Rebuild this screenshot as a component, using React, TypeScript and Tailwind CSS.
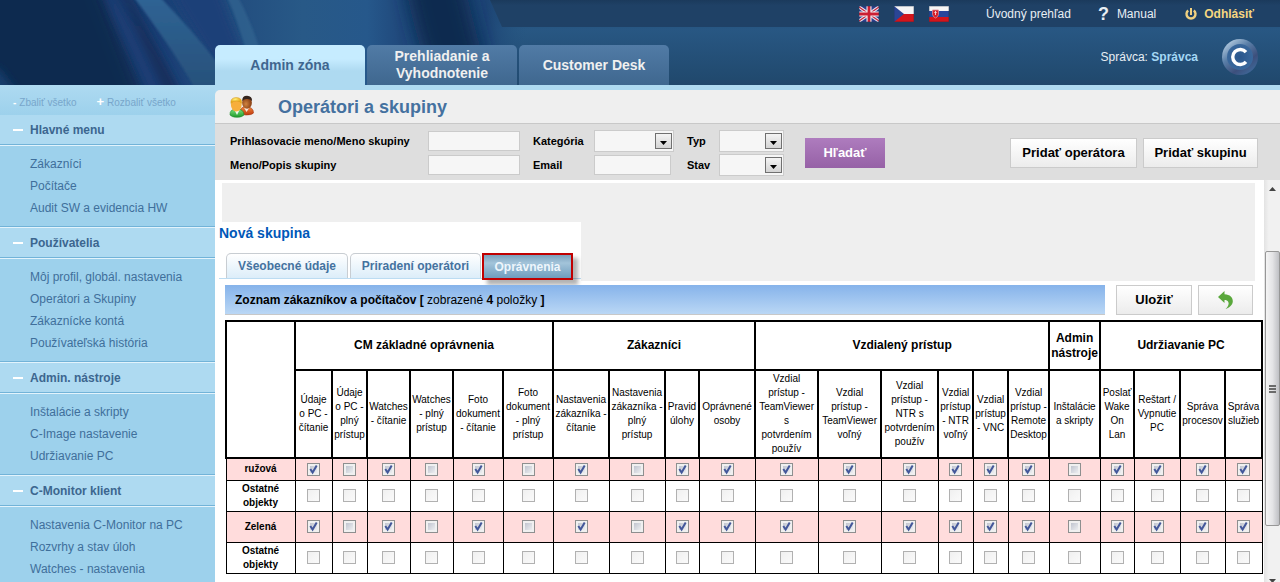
import type { ReactNode } from "react";

type Section = { title: string; items: string[] };

const sections: Section[] = [
  { title: "Hlavné menu", items: ["Zákazníci", "Počítače", "Audit SW a evidencia HW"] },
  {
    title: "Používatelia",
    items: ["Môj profil, globál. nastavenia", "Operátori a Skupiny", "Zákaznícke kontá", "Používateľská história"],
  },
  { title: "Admin. nástroje", items: ["Inštalácie a skripty", "C-Image nastavenie", "Udržiavanie PC"] },
  { title: "C-Monitor klient", items: ["Nastavenia C-Monitor na PC", "Rozvrhy a stav úloh", "Watches - nastavenia"] },
];

const groups = [
  { title: "CM základné oprávnenia", span: 6 },
  { title: "Zákazníci", span: 4 },
  { title: "Vzdialený prístup", span: 6 },
  { title: "Admin nástroje", span: 1 },
  { title: "Udržiavanie PC", span: 4 },
];

const columns = [
  { label: "Údaje\no PC -\nčítanie", width: "w-[37px]", on: true },
  { label: "Údaje\no PC -\nplný\nprístup", width: "w-[35px]", on: false },
  { label: "Watches\n- čítanie", width: "w-[43px]", on: true },
  { label: "Watches\n- plný\nprístup", width: "w-[43px]", on: false },
  { label: "Foto\ndokument\n- čítanie", width: "w-[50px]", on: true },
  { label: "Foto\ndokument\n- plný\nprístup", width: "w-[50px]", on: false },
  { label: "Nastavenia\nzákazníka -\nčítanie", width: "w-[56px]", on: true },
  { label: "Nastavenia\nzákazníka -\nplný\nprístup", width: "w-[56px]", on: false },
  { label: "Pravid\núlohy", width: "w-[34px]", on: true },
  { label: "Oprávnené\nosoby", width: "w-[56px]", on: true },
  { label: "Vzdial\nprístup -\nTeamViewer\ns\npotvrdením\npoužív", width: "w-[63px]", on: true },
  { label: "Vzdial\nprístup -\nTeamViewer\nvoľný", width: "w-[63px]", on: true },
  { label: "Vzdial\nprístup -\nNTR s\npotvrdením\npoužív", width: "w-[57px]", on: true },
  { label: "Vzdial\nprístup\n- NTR\nvoľný", width: "w-[35px]", on: true },
  { label: "Vzdial\nprístup\n- VNC", width: "w-[35px]", on: true },
  { label: "Vzdial\nprístup -\nRemote\nDesktop", width: "w-[41px]", on: true },
  { label: "Inštalácie\na skripty", width: "w-[51px]", on: false },
  { label: "Poslať\nWake\nOn\nLan", width: "w-[34px]", on: true },
  { label: "Reštart /\nVypnutie\nPC", width: "w-[46px]", on: true },
  { label: "Správa\nprocesov", width: "w-[45px]", on: true },
  { label: "Správa\nslužieb", width: "w-[37px]", on: true },
];

const rows = [
  { name: "ružová", active: true, height: "h-[22px]" },
  { name: "Ostatné\nobjekty", active: false, height: "h-[31px]" },
  { name: "Zelená", active: true, height: "h-[31px]" },
  { name: "Ostatné\nobjekty", active: false, height: "h-[31px]" },
];

function HeaderArt() {
  return (
    <svg className="absolute inset-y-0 left-0 h-full w-[540px]" viewBox="0 0 540 85" preserveAspectRatio="none" aria-hidden="true">
      <defs>
        <linearGradient id="base" x1="0" x2="1" y1="0" y2="0">
          <stop offset="0" stopColor="#10294f" />
          <stop offset="0.3" stopColor="#1a3f75" />
          <stop offset="0.45" stopColor="#234f80" />
          <stop offset="0.56" stopColor="#285987" />
          <stop offset="0.68" stopColor="#26588b" />
          <stop offset="0.74" stopColor="#20497c" />
          <stop offset="0.9" stopColor="#1c4475" />
          <stop offset="0.98" stopColor="#265680" stopOpacity="0" />
        </linearGradient>
        <linearGradient id="stripe" x1="0" x2="0" y1="0" y2="1">
          <stop offset="0" stopColor="#2f6495" />
          <stop offset="1" stopColor="#27507a" />
        </linearGradient>
        <filter id="wide" filterUnits="userSpaceOnUse" x="-80" y="-80" width="700" height="260">
          <feGaussianBlur stdDeviation="9" />
        </filter>
        <filter id="soft" filterUnits="userSpaceOnUse" x="-80" y="-80" width="700" height="260">
          <feGaussianBlur stdDeviation="4" />
        </filter>
        <filter id="fine" filterUnits="userSpaceOnUse" x="-80" y="-80" width="700" height="260">
          <feGaussianBlur stdDeviation="1" />
        </filter>
      </defs>
      <rect width="540" height="85" fill="url(#base)" />
      <path d="M-60 -60H85L165 150H-60Z" fill="#0f2950" filter="url(#wide)" />
      <path d="M-30 60L0 70L30 110H-30Z" fill="#173c6c" filter="url(#soft)" />
      <g filter="url(#soft)">
        <path d="M95 -30L115 -5C135 30 148 60 170 110H155C135 60 115 30 95 -30Z" fill="#1a3e74" />
        <path d="M115 -30C140 20 160 50 190 110H172C150 60 135 30 115 -30Z" fill="#132f5c" />
        <path d="M165 -20H215C228 20 240 40 255 90H228C210 50 185 20 165 -20Z" fill="#1b3f78" />
      </g>
      <path d="M400 -50H458C468 10 480 40 500 130H450C430 70 412 40 400 -50Z" fill="#0f2950" filter="url(#wide)" />
      <g filter="url(#fine)">
        <path d="M132 -5H158C180 18 200 40 218 64V90H196C176 55 155 25 132 -5Z" fill="url(#stripe)" />
        <path d="M226 -5H237C246 12 253 28 260 50H246C240 30 234 12 226 -5Z" fill="#30628f" opacity="0.8" />
      </g>
    </svg>
  );
}

function FlagUK() {
  return (
    <svg width="20" height="16" viewBox="0 0 20 16" aria-hidden="true">
      <rect width="20" height="16" fill="#2b3f8c" />
      <path d="M0 1L20 15M20 1L0 15" stroke="#e9e4ee" strokeWidth="3.4" />
      <path d="M0 1L20 15M20 1L0 15" stroke="#c5263c" strokeWidth="1.2" />
      <path d="M10 0V16M0 8H20" stroke="#f3eef2" strokeWidth="5" />
      <path d="M10 0V16M0 8H20" stroke="#cb1f33" strokeWidth="2.8" />
      <rect width="20" height="16" fill="none" stroke="#1a2c4a" strokeOpacity="0.5" />
    </svg>
  );
}

function FlagCZ() {
  return (
    <svg width="20" height="16" viewBox="0 0 20 16" aria-hidden="true">
      <rect width="20" height="8" fill="#f5f5f5" />
      <rect y="8" width="20" height="8" fill="#d3151b" />
      <path d="M0 0L10 8L0 16Z" fill="#2a4595" />
      <rect width="20" height="16" fill="none" stroke="#1a2c4a" strokeOpacity="0.5" />
    </svg>
  );
}

function FlagSK() {
  return (
    <svg width="20" height="16" viewBox="0 0 20 16" aria-hidden="true">
      <rect width="20" height="5" fill="#f5f5f5" />
      <rect y="5" width="20" height="6" fill="#27469c" />
      <rect y="11" width="20" height="5" fill="#d3151b" />
      <path d="M3.500 4H9.500V8.500Q9 11 6.500 12Q4 11 3.500 8.500Z" fill="#d8202a" stroke="#e08c98" strokeWidth="0.800" />
      <path d="M6.500 5V9M5.300 6.500H7.700" stroke="#f4d5da" strokeWidth="0.900" />
      <rect width="20" height="16" fill="none" stroke="#1a2c4a" strokeOpacity="0.5" />
    </svg>
  );
}

function PowerIcon() {
  return (
    <svg width="12" height="12" viewBox="0 0 12 12" fill="none" stroke="#f0d080" aria-hidden="true">
      <path d="M3.200 2.500A4.500 4.500 0 1 0 8.800 2.500" strokeWidth="2.400" />
      <path d="M6 0V7" strokeWidth="2" />
    </svg>
  );
}

function LogoBadge() {
  return (
    <svg width="38" height="38" viewBox="0 0 38 38" aria-hidden="true">
      <defs>
        <linearGradient id="ring" x1="0.1" y1="0.1" x2="0.8" y2="1">
          <stop offset="0" stopColor="#b4cbe0" />
          <stop offset="0.350" stopColor="#5a7fa8" />
          <stop offset="0.700" stopColor="#3c4f7c" />
          <stop offset="1" stopColor="#3f6b9c" />
        </linearGradient>
        <radialGradient id="disc">
          <stop offset="0" stopColor="#2a568c" />
          <stop offset="1" stopColor="#3a689c" />
        </radialGradient>
      </defs>
      <circle cx="19" cy="19" r="18" fill="url(#ring)" />
      <circle cx="19" cy="19" r="13" fill="url(#disc)" />
      <path d="M25 14.200A7.500 7.500 0 1 0 25 23.800" fill="none" stroke="#fff" strokeWidth="3.400" />
    </svg>
  );
}

function PeopleIcon() {
  return (
    <svg width="26" height="24" viewBox="0 0 26 24" aria-hidden="true">
      <defs>
        <linearGradient id="green" x1="0" y1="0" x2="0" y2="1">
          <stop offset="0" stopColor="#7fe07c" />
          <stop offset="1" stopColor="#1c9a2b" />
        </linearGradient>
        <linearGradient id="orange" x1="0" y1="0" x2="0" y2="1">
          <stop offset="0" stopColor="#f28a3c" />
          <stop offset="1" stopColor="#c0390e" />
        </linearGradient>
        <radialGradient id="blond" cx="0.4" cy="0.3">
          <stop offset="0" stopColor="#fff07a" />
          <stop offset="1" stopColor="#e8a81a" />
        </radialGradient>
        <radialGradient id="tan" cx="0.4" cy="0.6">
          <stop offset="0" stopColor="#d08440" />
          <stop offset="1" stopColor="#8f4518" />
        </radialGradient>
      </defs>
      <path d="M10 19Q11 11.500 17 11.500Q24.500 12 24.500 18Q23 20 17 20Z" fill="url(#orange)" stroke="#a63510" strokeWidth="0.600" />
      <path d="M15 12.500L17.500 17L20.500 12.500Z" fill="#f5e9e0" />
      <ellipse cx="18" cy="7.800" rx="4.900" ry="6" fill="url(#tan)" />
      <path d="M13.200 6Q13 0.800 18 0.700Q23.400 1 23 6Q21 3.700 18 4Q15 3.700 13.200 6Z" fill="#33231c" />
      <path d="M1 20Q0.500 14 7.500 14Q15 14 15 20Q13 22.300 8 22.300Q3 22.300 1 20Z" fill="url(#green)" stroke="#1c8a2a" strokeWidth="0.600" />
      <path d="M5.500 15L8 20L10.500 15Z" fill="#effaf0" />
      <ellipse cx="7.300" cy="9.800" rx="5.400" ry="6.600" fill="#f7ae3c" />
      <path d="M1.900 8.500Q1.200 2.600 7.300 2.500Q13.300 2.600 12.700 8.500Q10.500 5.700 7.300 6Q4.100 5.700 1.900 8.500Z" fill="url(#blond)" stroke="#d59a1c" strokeWidth="0.500" />
    </svg>
  );
}

function BackArrow() {
  return (
    <svg width="15" height="18" viewBox="0 0 15 18" aria-hidden="true">
      <path d="M0 6L6.500 0V3.200C12 3.400 15 6.500 14.800 10.500C14.600 14 11.500 16.800 7.600 18C10.200 15.500 11.300 13 10.300 11C9.600 9.600 8.300 9 6.500 9V12Z" fill="#5aa83c" />
    </svg>
  );
}

function TextField({ id, width }: { id: string; width: string }) {
  return <input id={id} type="text" className={`${width} block h-5 border border-[#cbcbcb] bg-[#f6f6f6] px-1 text-xs outline-none`} />;
}

function SelectField({ id, width }: { id: string; width: string }) {
  return (
    <span className={`${width} relative block h-[22px]`}>
      <select id={id} className="block size-full appearance-none border border-[#cbcbcb] bg-[#f6f6f6] text-xs outline-none">
        <option />
      </select>
      <span className="pointer-events-none absolute top-[3px] right-[2px] flex h-4 w-[17px] items-center justify-center border border-[#707070] bg-linear-to-b from-[#f4f4f4] to-[#d4d4d4]">
        <svg width="7" height="4" viewBox="0 0 7 4" className="mt-[3px]" aria-hidden="true">
          <path d="M0 0H7L3.500 4Z" fill="#000" />
        </svg>
      </span>
    </span>
  );
}

function FieldLabel({ id, children }: { id: string; children: ReactNode }) {
  return (
    <label htmlFor={id} className="text-[11px] font-bold text-black">
      {children}
    </label>
  );
}

function PlainButton({ width, label, children }: { width: string; label?: string; children: ReactNode }) {
  return (
    <button
      type="button"
      aria-label={label}
      className={`${width} flex h-[30px] shrink-0 items-center justify-center border border-[#cbcbcb] bg-linear-to-b from-white to-[#ececec] text-[13px] font-bold whitespace-nowrap text-black`}
    >
      {children}
    </button>
  );
}

function Check({ label, checked, disabled }: { label: string; checked: boolean; disabled: boolean }) {
  return (
    <span className="relative mx-auto block size-[13px]">
      <input
        type="checkbox"
        aria-label={label}
        defaultChecked={checked}
        disabled={disabled}
        className="peer block size-[13px] appearance-none border border-[#8e8f8f] bg-linear-to-br from-[#b4b9c6] to-[#fafafa] shadow-[inset_0_0_0_2px_#f0f0f0] disabled:border-[#b1b1b1] disabled:from-[#f0f0f0] disabled:shadow-none"
      />
      <svg className="pointer-events-none absolute inset-0 hidden peer-checked:block" width="13" height="13" viewBox="0 0 13 13" aria-hidden="true">
        <path d="M3.300 6L5.600 9.500L9.700 2.500" fill="none" stroke="#43579a" strokeWidth="2" />
      </svg>
    </span>
  );
}

function Header() {
  const tab = "flex h-10 w-[150px] items-center justify-center rounded-t-[5px] px-4 text-center text-sm leading-[17px] font-bold";
  return (
    <header className="relative h-[85px] shrink-0 bg-linear-to-b from-[#1f4a72] via-[#285783] via-35% to-[#20486c]">
      <HeaderArt />
      <div className="relative flex h-full">
        <nav className="flex items-end gap-[2px] pl-[215px]">
          <a href="#admin" className={`${tab} bg-linear-to-b from-[#c6ecff] from-35% to-[#aedaf1] to-65% text-[#3f668f]`}>
            Admin zóna
          </a>
          <a href="#view" className={`${tab} bg-linear-to-b from-[#517ba6] to-[#3f678f] text-[#f0f0f0]`}>
            Prehliadanie a Vyhodnotenie
          </a>
          <a href="#desk" className={`${tab} bg-linear-to-b from-[#517ba6] to-[#3f678f] text-[#f0f0f0]`}>
            Customer Desk
          </a>
        </nav>
      </div>
      <div className="absolute inset-y-0 right-0 left-[490px] flex flex-col">
        <div className="flex h-[27px] items-center justify-end bg-linear-to-b from-[#1b3a5c] to-[#1f4166] to-20% pr-[26px] text-xs text-[#e8eef4] [clip-path:polygon(0_0,100%_0,100%_100%,12px_100%)]">
          <span className="mr-[37px] flex gap-[15px]">
            <a href="#en" aria-label="English"><FlagUK /></a>
            <a href="#cs" aria-label="Čeština"><FlagCZ /></a>
            <a href="#sk" aria-label="Slovenčina"><FlagSK /></a>
          </span>
          <a href="#overview" className="mr-[27px]">Úvodný prehľad</a>
          <a href="#manual" className="mr-[29px] flex items-center gap-2">
            <span className="text-lg leading-4 font-bold">?</span>
            Manual
          </a>
          <a href="#logout" className="flex items-center gap-[7px] font-bold text-[#f6d680]">
            <PowerIcon />
            Odhlásiť
          </a>
        </div>
        <div className="flex grow items-center justify-end gap-[23px] pt-px pr-[21px] text-xs text-[#e8eef4]">
          <span>
            Správca: <a href="#profile" className="font-bold text-[#a5d8f5]">Správca</a>
          </span>
          <LogoBadge />
        </div>
      </div>
    </header>
  );
}

function Sidebar() {
  return (
    <aside className="w-[215px] shrink-0 overflow-hidden bg-[#9dd1ec]">
      <div className="flex h-[30px] items-center bg-linear-to-b from-[#aedaf1] to-[#9dd1ec] pt-1 pl-[13px] text-[10px] text-[#78a6cb]">
        <button type="button" className="mr-5 flex items-center gap-[3px]">
          <span className="font-bold text-white">-</span>Zbaliť všetko
        </button>
        <button type="button" className="flex items-center gap-[3px]">
          <span className="text-[13px] leading-3 font-bold text-white">+</span>Rozbaliť všetko
        </button>
      </div>
      {sections.map((s, i) => (
        <section key={s.title}>
          <h2
            className={`${i ? "border-t border-[#72b3d8]" : ""} flex flex-col text-xs font-bold text-[#3c668f]`}
          >
            <span className={`${i ? "h-[31px] border-t border-t-[#e2f3fc]" : "h-[30px]"} flex items-center gap-[7px] border-b border-b-[#72b3d8] bg-[#aedaf1] pl-[13px]`}>
              <span className="h-[2px] w-[10px] bg-white" />
              {s.title}
            </span>
            <span className="h-px bg-[#e2f3fc]" />
          </h2>
          <ul className="py-[7px] pl-[30px] text-xs leading-[22px] text-[#3f6f9b]">
            {s.items.map((item) => (
              <li key={item} className="whitespace-nowrap">
                <a href="#menu">{item}</a>
              </li>
            ))}
          </ul>
        </section>
      ))}
    </aside>
  );
}

function Filters() {
  return (
    <form className="flex shrink-0 items-center bg-[#dedede] pt-[5px] pr-[22px] pb-[3px] pl-[15px]">
      <div className="grid auto-rows-[24px] grid-cols-[198px_105px_61px_93px_32px_65px] items-center">
        <FieldLabel id="login">Prihlasovacie meno/Meno skupiny</FieldLabel>
        <TextField id="login" width="w-[92px]" />
        <FieldLabel id="category">Kategória</FieldLabel>
        <SelectField id="category" width="w-20" />
        <FieldLabel id="type">Typ</FieldLabel>
        <SelectField id="type" width="w-[65px]" />
        <FieldLabel id="name">Meno/Popis skupiny</FieldLabel>
        <TextField id="name" width="w-[92px]" />
        <FieldLabel id="email">Email</FieldLabel>
        <TextField id="email" width="w-[77px]" />
        <FieldLabel id="state">Stav</FieldLabel>
        <SelectField id="state" width="w-[65px]" />
      </div>
      <button type="button" className="ml-[21px] h-[30px] w-20 bg-linear-to-b from-[#ae7cbe] to-[#9661a6] text-[13px] font-bold text-white">
        Hľadať
      </button>
      <div className="ml-auto flex gap-[6px]">
        <PlainButton width="w-[127px]">Pridať operátora</PlainButton>
        <PlainButton width="w-[115px]">Pridať skupinu</PlainButton>
      </div>
    </form>
  );
}

function GroupPanel() {
  const tab = "flex h-[25px] items-center justify-center rounded-t-[5px] border border-b-0 border-[#c8cdd2] bg-linear-to-b from-white to-[#dcedf9] text-xs font-bold text-[#44729f]";
  return (
    <div className="mr-[9px] ml-[7px] bg-[#efefef] pt-[39px]">
      <div className="-ml-[3px] w-[362px] bg-white pb-[2px]">
        <h2 className="h-[31px] pt-[1px] text-sm leading-5 font-bold text-[#0058b8]">Nová skupina</h2>
        <div className="flex gap-[2px] border-b border-[#bcdcf2] pl-[7px]">
          <button type="button" className={`${tab} w-[122px]`}>Všeobecné údaje</button>
          <button type="button" className={`${tab} w-[131px]`}>Priradení operátori</button>
          <button
            type="button"
            className="-mb-[2px] -ml-px flex h-[27px] w-[91px] items-center justify-center border-2 border-[#c00000] bg-linear-to-b from-[#7ba0bb] via-[#a3c4da] via-35% to-[#6f9dbd] text-xs font-bold text-[#eef6fc] shadow-[5px_5px_4px_rgba(0,0,0,0.3)]"
          >
            Oprávnenia
          </button>
        </div>
      </div>
    </div>
  );
}

function PermissionTable() {
  const head = "border-2 border-black p-0 text-center align-middle";
  return (
    <table className="w-full table-fixed border-collapse bg-white text-black">
      <colgroup>
        <col className="w-[69px]" />
        {columns.map((c) => (
          <col key={c.label} className={c.width} />
        ))}
      </colgroup>
      <thead>
        <tr className="h-[49px] text-xs leading-[15px] font-bold">
          <th rowSpan={2} className={head} aria-label="Objekt" />
          {groups.map((g) => (
            <th key={g.title} colSpan={g.span} className={head}>
              {g.title}
            </th>
          ))}
        </tr>
        <tr className="h-[88px] text-[10px] leading-[14px]">
          {columns.map((c) => (
            <th key={c.label} className={`${head} font-normal whitespace-pre-line`}>
              {c.label}
            </th>
          ))}
        </tr>
      </thead>
      <tbody>
        {rows.map((r, i) => (
          <tr key={i} className={`${r.height} ${r.active ? "bg-[#ffdcdc]" : "bg-white"}`}>
            <th className="border border-black p-0 text-center align-middle text-[10px] leading-[14px] font-bold whitespace-pre-line">{r.name}</th>
            {columns.map((c) => (
              <td key={c.label} className="border border-black p-0 align-middle">
                <Check label={`${r.name} ${c.label}`} checked={r.active && c.on} disabled={!r.active} />
              </td>
            ))}
          </tr>
        ))}
      </tbody>
    </table>
  );
}

function ScrollTrack() {
  return (
    <div className="flex w-4 shrink-0 flex-col items-center overflow-hidden bg-linear-to-r from-[#e3e3e3] to-[#f1f1f1] to-30%" aria-hidden="true">
      <div className="flex h-[71px] shrink-0 justify-center pt-[7px]">
        <svg width="7" height="4" viewBox="0 0 7 4"><path d="M0 4H7L3.500 0Z" fill="#444" /></svg>
      </div>
      <div className="flex h-[275px] w-[15px] shrink-0 flex-col items-center justify-center gap-px rounded-[2px] border border-[#979797] bg-linear-to-r from-[#f5f5f5] via-[#e4e4e6] to-[#bfc0c4]">
        <span className="h-[2px] w-[7px] bg-[#6b6b6b]" />
        <span className="h-[2px] w-[7px] bg-[#6b6b6b]" />
        <span className="h-[2px] w-[7px] bg-[#6b6b6b]" />
      </div>
      <div className="flex h-[71px] shrink-0 justify-center pt-[53px]">
        <svg width="7" height="4" viewBox="0 0 7 4"><path d="M0 0H7L3.500 4Z" fill="#444" /></svg>
      </div>
    </div>
  );
}

export default function App() {
  return (
    <div className="flex h-screen flex-col overflow-hidden bg-white font-['Liberation_Sans',Arial,sans-serif]">
      <Header />
      <div className="flex min-h-0 grow">
        <Sidebar />
        <main className="flex min-w-0 grow flex-col bg-[#aedaf1] pt-[5px]">
          <div className="flex h-[34px] shrink-0 items-center gap-[23px] rounded-tl-[5px] border-b border-[#c8c8c8] bg-[#efefef] pl-[14px]">
            <PeopleIcon />
            <h1 className="text-lg font-bold text-[#44719f]">Operátori a skupiny</h1>
          </div>
          <Filters />
          <div className="flex min-h-0 grow bg-white">
            <div className="min-w-0 grow overflow-hidden pt-[3px]">
              <GroupPanel />
              <div className="flex pt-1 pr-[11px] pl-[10px]">
                <h3 className="mr-[11px] flex h-[30px] grow items-center border-b border-[#c8c8c8] bg-linear-to-b from-[#86b3ea] to-[#bad7f5] pl-[10px] text-xs font-bold whitespace-pre text-black">
                  Zoznam zákazníkov a počítačov [ <span className="font-normal">zobrazené</span> 4 <span className="font-normal">položky</span> ]
                </h3>
                <div className="flex gap-[6px]">
                  <PlainButton width="w-[76px]">Uložiť</PlainButton>
                  <PlainButton width="w-[55px]" label="Späť"><BackArrow /></PlainButton>
                </div>
              </div>
              <div className="pt-[5px] pr-px pl-[10px]">
                <PermissionTable />
              </div>
            </div>
            <ScrollTrack />
          </div>
        </main>
      </div>
    </div>
  );
}
